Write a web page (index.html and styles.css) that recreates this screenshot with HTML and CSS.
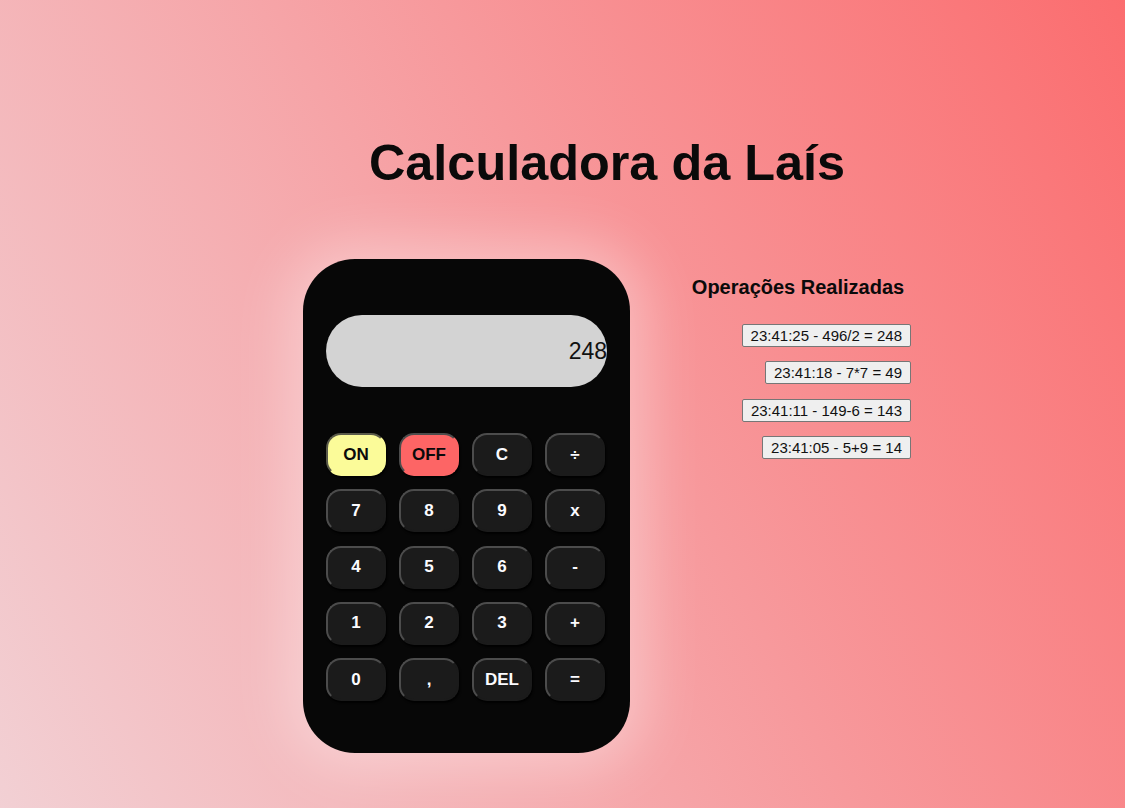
FILE: index.html
```html
<!DOCTYPE html>
<html lang="pt-BR">
<head>
<meta charset="utf-8">
<title>Calculadora da Laís</title>
<link rel="stylesheet" href="styles.css">
</head>
<body>
<main class="wrapper">
  <h1 class="title">Calculadora da Laís</h1>
  <div class="row">
    <section class="calculator">
      <div class="display">248</div>
      <div class="keys">
        <button class="key key-on">ON</button>
        <button class="key key-off">OFF</button>
        <button class="key">C</button>
        <button class="key">÷</button>
        <button class="key">7</button>
        <button class="key">8</button>
        <button class="key">9</button>
        <button class="key">x</button>
        <button class="key">4</button>
        <button class="key">5</button>
        <button class="key">6</button>
        <button class="key">-</button>
        <button class="key">1</button>
        <button class="key">2</button>
        <button class="key">3</button>
        <button class="key">+</button>
        <button class="key">0</button>
        <button class="key">,</button>
        <button class="key">DEL</button>
        <button class="key">=</button>
      </div>
    </section>
    <section class="history">
      <h2 class="history-title">Operações Realizadas</h2>
      <ul class="history-list">
        <li class="history-item">23:41:25 - 496/2 = 248</li>
        <li class="history-item">23:41:18 - 7*7 = 49</li>
        <li class="history-item">23:41:11 - 149-6 = 143</li>
        <li class="history-item">23:41:05 - 5+9 = 14</li>
      </ul>
    </section>
  </div>
</main>
</body>
</html>
```

FILE: styles.css
```css
* { box-sizing: border-box; }

html, body {
  margin: 0;
  padding: 0;
}

body {
  min-height: 808px;
  font-family: "Liberation Sans", Arial, sans-serif;
  background: linear-gradient(63deg, #f2d0d4 0%, #fb6d6f 100%);
  color: #0a0a0a;
}

.wrapper {
  width: 608px;
  margin-left: 303px;
  padding-top: 134px;
}

.title {
  margin: 0 0 67px;
  font-size: 50.4px;
  font-weight: bold;
  line-height: 58px;
  text-align: center;
  color: #0a0a0a;
}

.row {
  display: flex;
  align-items: flex-start;
  gap: 55px;
}

.calculator {
  width: 327px;
  height: 494px;
  padding: 56px 23px 53px;
  background: #070707;
  border-radius: 52px;
  box-shadow: 0 0 55px 16px rgba(255, 255, 255, 0.35);
}

.display {
  height: 72px;
  border-radius: 36px;
  background: #d3d3d3;
  font-size: 23px;
  line-height: 72px;
  text-align: right;
  color: #111;
  margin-bottom: 46px;
}

.keys {
  display: grid;
  grid-template-columns: repeat(4, 60px);
  grid-auto-rows: 43px;
  column-gap: 13px;
  row-gap: 13.25px;
}

.key {
  font-family: "Liberation Sans", Arial, sans-serif;
  font-size: 17px;
  font-weight: bold;
  color: #fbfbff;
  background: #1b1b1b;
  border: 2px solid;
  border-color: #4c4c4c #1b1b1b #1b1b1b #4c4c4c;
  border-radius: 15px;
  box-shadow: 1px 2px 2px rgba(0, 0, 0, 0.9);
  padding: 0;
}

.key-on {
  background: #fbfb99;
  border-color: #5a5a4a #fbfb99 #fbfb99 #5a5a4a;
  color: #0a0a0a;
}

.key-off {
  background: #fd6565;
  border-color: #4c4c4c #fd6565 #fd6565 #4c4c4c;
  color: #0a0a0a;
}

.history {
  width: 226px;
  padding-top: 17px;
}

.history-title {
  margin: 0 0 25px;
  font-size: 20px;
  line-height: 23px;
  font-weight: bold;
  text-align: center;
  color: #0a0a0a;
}

.history-list {
  list-style: none;
  margin: 0;
  padding: 0;
  display: flex;
  flex-direction: column;
  align-items: flex-end;
  gap: 14.3px;
}

.history-item {
  background: #efefef;
  border: 1px solid #767676;
  border-radius: 2px;
  padding: 2px 8px 2px 8px;
  font-size: 15px;
  line-height: 17px;
  color: #111;
}
```
